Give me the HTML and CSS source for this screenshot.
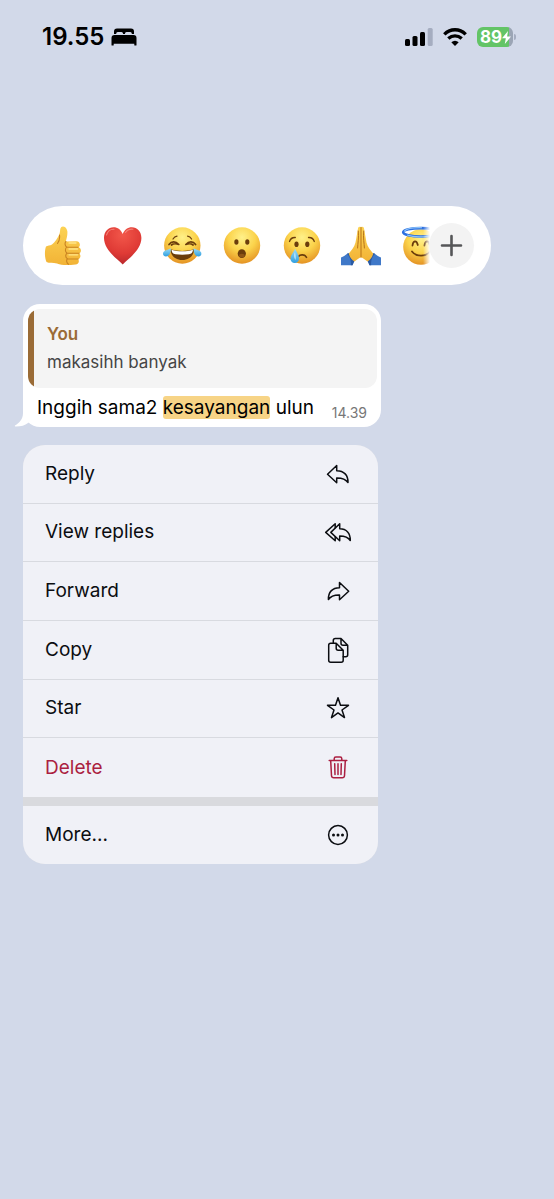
FILE: index.html
```html
<!DOCTYPE html>
<html lang="id">
<head>
    <meta charset="UTF-8">
    <meta name="viewport" content="width=device-width, initial-scale=1">
    <title>Message actions</title>

    <link rel="stylesheet" href="styles.css">
</head>
<body>

<svg class="defs" aria-hidden="true">
    <defs>
        <radialGradient id="face" cx="50%" cy="28%" r="75%">
            <stop offset="0" stop-color="#fff18a"/>
            <stop offset=".5" stop-color="#fbd34b"/>
            <stop offset="1" stop-color="#e28d20"/>
        </radialGradient>
        <linearGradient id="skin" x1="0" y1="0" x2="0" y2="1">
            <stop offset="0" stop-color="#fcd354"/>
            <stop offset="1" stop-color="#f2b336"/>
        </linearGradient>
        <radialGradient id="heart" cx="50%" cy="20%" r="85%">
            <stop offset="0" stop-color="#f2574a"/>
            <stop offset=".6" stop-color="#df3a35"/>
            <stop offset="1" stop-color="#b3262b"/>
        </radialGradient>
        <linearGradient id="tear" x1="0" y1="0" x2="0" y2="1">
            <stop offset="0" stop-color="#9bdcf8"/>
            <stop offset="1" stop-color="#2f9fe0"/>
        </linearGradient>
    </defs>
</svg>

<header class="status">
    <div class="status__left">
        <span class="status__time">19.55</span>
        <svg class="status__bed" width="26" height="18" viewBox="0 0 26 18" aria-hidden="true">
            <path d="M3 6V3.500Q3 .5 6 .5H20Q23 .5 23 3.500V6H20.800V5.500Q20.800 4 19.300 4H15.500Q14 4 14 5.500V6H12V5.500Q12 4 10.500 4H6.700Q5.200 4 5.200 5.500V6Z"/>
            <path d="M.5 17V10Q.5 7 3.500 7H22.500Q25.500 7 25.500 10V17Q25.500 17.500 25 17.500H23.800Q23.300 17.500 23.300 17V15.800H2.700V17Q2.700 17.500 2.200 17.500H1Q.5 17.500 .5 17Z"/>
        </svg>
    </div>
    <div class="status__right">
        <svg width="28" height="20" viewBox="0 0 28 20" aria-label="Signal">
            <rect x="0" y="12" width="5" height="7" rx="1.500"/>
            <rect x="7.500" y="9" width="5" height="10" rx="1.500"/>
            <rect x="15" y="5" width="5" height="14" rx="1.500"/>
            <rect x="22.700" y="1" width="5" height="18" rx="1.500" fill="#a5adc0"/>
        </svg>
        <svg width="24" height="20" viewBox="0 0 24 20" aria-label="Wi-Fi">
            <g fill="none" stroke="#000" stroke-width="3.400">
                <path d="M1.300 7.400Q6 2.800 12 2.800T22.700 7.400"/>
                <path d="M5.300 11.600Q8.300 8.900 12 8.900T18.700 11.600"/>
            </g>
            <path d="M12 19 8.300 15.300Q12 12 15.700 15.300Z"/>
        </svg>
        <div class="battery">
            <span class="battery__level">89</span>
            <svg width="9" height="13" viewBox="0 0 9 13" aria-hidden="true">
                <path fill="#fff" d="M6 0 0 7.200H3.800L2.800 13 9 5.500H5.100Z"/>
            </svg>
        </div>
    </div>
</header>

<main class="chat">
    <div class="reactions">
        <div class="reactions__list">
            <button class="reactions__item" aria-label="Thumbs up">
                <svg width="40" height="40" viewBox="0 0 40 40">
                    <path fill="url(#skin)" d="M3 20.500C4.500 19.500 7 19.800 9 18.500 12 16.500 14.500 12 16.300 8.500 17.500 5.500 16.600 2.500 18.300 1 20 -.3 23.500 .8 24.300 5 24.800 8.500 23.600 12 22.900 15.500L33.500 15.300C37 15.300 38 20 35.500 21.300 38.600 22.200 38.600 26.500 36.200 27.500 38.200 29 37.700 32.200 35.300 33.200 36.700 35.800 35.300 38.300 32.500 38.500 25 39.200 19 39.500 14 37.500 10 36.500 6 37.500 3.500 36 1.500 31.500 1.500 24.500 3 20.500Z"/>
                    <path fill="none" stroke="#c98322" stroke-width="1.100" stroke-linecap="round" d="M22.900 15.500C21.500 17 22 20 23.600 21 22 23 22 25.800 23.800 27 22.500 29 22.600 31.500 24.400 32.700 23 34.500 23.600 37 25.500 38.300M24 21.300H35M24 27.200H36M24.500 33H35M16.500 9C17 12.500 16 15.500 14.500 17.500"/>
                    <path fill="none" stroke="#ffe588" stroke-width="1.300" stroke-linecap="round" d="M26 17H33M26 23H34.500M26 28.800H34.500"/>
                </svg>
            </button>
            <button class="reactions__item" aria-label="Heart">
                <svg width="40" height="40" viewBox="0 0 40 40">
                    <path fill="url(#heart)" d="M19.700 38.400C13 32 1 23.500 1 12 1 5.500 5.300 1.300 10.500 1.300 14.800 1.300 18 4 19.700 8 21.400 4 24.600 1.300 28.900 1.300 34.100 1.300 38.400 5.500 38.400 12 38.400 23.500 26.400 32 19.700 38.400Z"/>
                    <path fill="none" stroke="#f59a90" stroke-width="1.100" stroke-linecap="round" opacity=".7" d="M3.500 9C5 4.500 8 3 11 3.200M22.500 6.500C24.500 3.500 27 2.900 30 3.200"/>
                </svg>
            </button>
            <button class="reactions__item" aria-label="Tears of joy">
                <svg width="40" height="40" viewBox="0 0 40 40">
                    <circle cx="20.300" cy="19.500" r="18.200" fill="url(#face)"/>
                    <path fill="#6b3d0c" d="M8.500 23.300C16 25.500 24.500 25.500 32 23.300 32 29.500 27.500 34 20.300 34S8.500 29.500 8.500 23.300Z"/>
                    <path fill="#fff" d="M9.500 23.800C16 25.800 24.500 25.800 31 23.800 30.500 27 29.500 27.800 27 28.200 22.500 28.800 18 28.800 13.500 28.200 11 27.800 10 27 9.500 23.800Z"/>
                    <g fill="none" stroke="#6b3d0c" stroke-width="1.700" stroke-linecap="round" stroke-linejoin="round">
                        <path d="M7 18.500C9.500 15.200 13.500 15 16.800 18.500 13.800 17.400 11 17.800 9.500 19"/>
                        <path d="M33.600 18.500C31.100 15.200 27.100 15 23.800 18.500 26.800 17.400 29.600 17.800 31.100 19"/>
                        <path stroke-width="1.200" d="M11 13C12 11.400 13.300 10.500 15 10.200M29.600 13C28.600 11.400 27.300 10.500 25.600 10.200"/>
                    </g>
                    <path fill="url(#tear)" d="M8.800 22.300C9 27 7.300 30.500 3.900 30.500 1.500 30.500 .3 28 1.500 26 3 23.800 6 24 8.800 22.300Z"/>
                    <path fill="url(#tear)" d="M31.600 22.300C31.400 27 33.100 30.500 36.500 30.500 38.900 30.500 40.100 28 38.900 26 37.400 23.800 34.400 24 31.600 22.300Z"/>
                </svg>
            </button>
            <button class="reactions__item" aria-label="Surprised">
                <svg width="40" height="40" viewBox="0 0 40 40">
                    <circle cx="20" cy="19.500" r="18.200" fill="url(#face)"/>
                    <ellipse cx="14.400" cy="16" rx="2.100" ry="2.800" fill="#6b3d0c"/>
                    <ellipse cx="25.300" cy="16" rx="2.100" ry="2.800" fill="#6b3d0c"/>
                    <ellipse cx="19.800" cy="27.600" rx="4.100" ry="4.300" fill="#6b3d0c"/>
                    <ellipse cx="19.800" cy="29.600" rx="2.800" ry="1.900" fill="#8d5516"/>
                </svg>
            </button>
            <button class="reactions__item" aria-label="Crying">
                <svg width="40" height="40" viewBox="0 0 40 40">
                    <circle cx="20" cy="19.500" r="18.200" fill="url(#face)"/>
                    <ellipse cx="14.500" cy="18.300" rx="2.100" ry="2.800" fill="#6b3d0c"/>
                    <ellipse cx="25.300" cy="18.300" rx="2.100" ry="2.800" fill="#6b3d0c"/>
                    <g fill="none" stroke="#6b3d0c" stroke-width="1.300" stroke-linecap="round">
                        <path d="M7.500 15.500C8.300 13 10.500 11.300 13.300 11.500M32.300 15.500C31.500 13 29.300 11.300 26.500 11.500"/>
                        <path stroke-width="1.600" d="M16.500 30.500C18 28.200 23 28.200 24.500 31.300"/>
                    </g>
                    <path fill="url(#tear)" d="M13.200 22.800C14.500 26 17 29 17 32.400 17 35.200 15.200 37 12.700 37S8.500 35.200 8.500 32.400C8.500 29 12 26 13.200 22.800Z"/>
                    <path fill="#dff5ff" opacity=".7" d="M13 26C13.500 28.500 14.200 31 13.500 34 12 32 11.500 29 13 26Z"/>
                </svg>
            </button>
            <button class="reactions__item" aria-label="Folded hands">
                <svg width="40" height="40" viewBox="0 0 40 40">
                    <path fill="#3f78c8" d="M0 31.500C3 30.500 5 28.500 7.200 27L13.500 34.500 11.500 39.200H0ZM40 31.500C37 30.500 35 28.500 32.800 27L26.500 34.500 28.500 39.200H40Z"/>
                    <path fill="#2b5aa2" d="M7.200 27 13.500 34.500 11.500 39.200H9.800C10.500 34.500 8.500 30.500 6.200 28ZM32.800 27 26.500 34.500 28.500 39.200H30.200C29.500 34.500 31.500 30.500 33.800 28Z"/>
                    <path fill="url(#skin)" d="M20 1.200C18.600 .4 17 .8 16.900 3L14.500 16.500C13.500 21 10 25 7.800 27.500 8.500 31 11 34.200 13.500 35.500 16.300 33.500 18.600 31.500 20 31.500S23.700 33.500 26.500 35.500C29 34.200 31.500 31 32.200 27.500 30 25 26.500 21 25.500 16.500L23.100 3C23 .8 21.400 .4 20 1.200Z"/>
                    <path fill="none" stroke="#b87318" stroke-width="1" stroke-linecap="round" d="M20 1.500V31M17.300 5C18 12 16.800 17 16.600 22M22.700 5C22 12 23.200 17 23.400 22"/>
                </svg>
            </button>
            <button class="reactions__item" aria-label="Halo">
                <svg width="40" height="40" viewBox="0 0 40 40">
                    <circle cx="20" cy="21" r="17.800" fill="url(#face)"/>
                    <g fill="none" stroke="#6b3d0c" stroke-width="1.800" stroke-linecap="round">
                        <path d="M11.500 19.500C12 14.500 15.500 13.700 16.800 19M23.500 19.500C24 14.500 27.500 13.700 28.800 19"/>
                        <path d="M11 25.500C15 31 25 31 29 25.500"/>
                    </g>
                    <ellipse cx="20" cy="6.300" rx="17.800" ry="4.200" fill="none" stroke="#2c6fe0" stroke-width="2.600"/>
                    <path fill="none" stroke="#8cc4fa" stroke-width="1.100" d="M3 5.300C5.500 2.500 14 1.500 21 1.700M6 9C12 11 22 11 28 10"/>
                </svg>
            </button>
        </div>
        <button class="reactions__more" aria-label="More reactions">
            <svg width="23" height="23" viewBox="0 0 23 23">
                <path fill="none" stroke="#555658" stroke-width="2.600" stroke-linecap="round" d="M11.500 2V21M2 11.500H21"/>
            </svg>
        </button>
    </div>

    <article class="bubble">
        <svg class="bubble__tail" width="20" height="18" viewBox="0 0 20 18" aria-hidden="true">
            <path fill="#fff" d="M9 0V4C9 10 5.500 14 1 16.500 .5 17 1 17.500 2 17.500 7 17.500 11 16.500 14 14L20 9V0Z"/>
        </svg>
        <blockquote class="quote">
            <p class="quote__author">You</p>
            <p class="quote__text">makasihh banyak</p>
        </blockquote>
        <div class="bubble__body">
            <p class="bubble__text">Inggih sama2 <mark>kesayangan</mark> ulun</p>
            <time class="bubble__time">14.39</time>
        </div>
    </article>

    <div class="menu">
        <div class="menu__group menu__group--main">
            <button class="menu__item">
                Reply
                <svg class="menu__icon" viewBox="0 0 28 28">
                    <path d="M3.500 14.300 12.700 5.500V10.700C20 10.700 24.200 15.200 24 22.600 21.500 18.900 18 17.800 12.700 17.900V22.700Z"/>
                </svg>
            </button>
            <button class="menu__item">
                View replies
                <svg class="menu__icon" viewBox="0 0 28 28">
                    <path d="M6.800 14.400 15.700 5.700V10.800C22.500 10.800 26.500 15.200 26.300 22.600 24 18.900 20.800 18 15.700 18V22.800Z"/>
                    <path d="M11.200 9.800V5.700L1.700 14.400 11.200 22.800V18.800"/>
                </svg>
            </button>
            <button class="menu__item">
                Forward
                <svg class="menu__icon" viewBox="0 0 28 28">
                    <path d="M24.700 14.300 15.500 5.500V10.700C8.200 10.700 4.200 15.200 4.400 22.600 6.700 18.900 10.200 17.800 15.500 17.900V22.700Z"/>
                </svg>
            </button>
            <button class="menu__item">
                Copy
                <svg class="menu__icon" viewBox="0 0 28 28">
                    <path d="M6.700 7.200H12.200L19.200 14.300V24.300Q19.200 26.300 17.200 26.300H6.700Q4.700 26.300 4.700 24.300V9.200Q4.700 7.200 6.700 7.200ZM12.200 7.200V12.300Q12.200 14.300 14.200 14.300H19.200"/>
                    <path d="M9.300 7V4.500Q9.300 2.500 11.300 2.500H17L23.700 9.200V18.700Q23.700 20.700 21.700 20.700H19.200M17 2.500V7.200Q17 9.200 19 9.200H23.700"/>
                </svg>
            </button>
            <button class="menu__item">
                Star
                <svg class="menu__icon" viewBox="0 0 28 28">
                    <path d="M14 3.700 16.500 11.300H24.500L18 16 20.500 23.600 14 18.900 7.500 23.600 10 16 3.500 11.300H11.500Z"/>
                </svg>
            </button>
            <button class="menu__item menu__item--danger">
                Delete
                <svg class="menu__icon" viewBox="0 0 28 28">
                    <path d="M5.200 6.500H22.800M10.200 6.300V4.700Q10.200 3 11.900 3H16.100Q17.800 3 17.800 4.700V6.300M6.700 6.700 7.500 21.700Q7.700 23.700 9.700 23.700H18.300Q20.300 23.700 20.500 21.700L21.300 6.700M10.700 9.800 11 20.500M14 9.800V20.500M17.300 9.800 17 20.500"/>
                </svg>
            </button>
        </div>
        <div class="menu__group">
            <button class="menu__item">
                More...
                <svg class="menu__icon" viewBox="0 0 28 28">
                    <circle cx="14" cy="14" r="9.400"/>
                    <g class="menu__dots">
                        <circle cx="9.500" cy="14" r="1.500"/>
                        <circle cx="14" cy="14" r="1.500"/>
                        <circle cx="18.500" cy="14" r="1.500"/>
                    </g>
                </svg>
            </button>
        </div>
    </div>
</main>

</body>
</html>
```
FILE: styles.css
```css
* {
    box-sizing: border-box;
    margin: 0;
    padding: 0;
}

body {
    background: #d2d9e9;
    color: #0b0d11;
    font-family: Inter, "Liberation Sans", sans-serif;
    font-size: 19px;
    min-height: 100vh;
}

button {
    background: none;
    border: none;
    color: inherit;
    font: inherit;
    cursor: pointer;
}

svg {
    display: block;
    flex-shrink: 0;
}

.defs {
    position: absolute;
    width: 0;
    height: 0;
}

/* status bar */
.status {
    display: flex;
    justify-content: space-between;
    align-items: center;
    height: 74px;
    padding: 0 41px 0 42px;
}
.status__left, .status__right {
    display: flex;
    align-items: center;
}
.status__left {
    gap: 7px;
}
.status__right {
    gap: 10px;
}
.status__time {
    color: #000;
    font-size: 24px;
    font-weight: 600;
    line-height: 28px;
}
.battery {
    display: flex;
    align-items: center;
    position: relative;
    height: 20px;
    width: 36px;
    padding-left: 3px;
    border-radius: 6px;
    background: linear-gradient(to right, #63c466 89%, #9ba5b5 89%);
}
.battery::after {
    content: "";
    position: absolute;
    left: 100%;
    top: 7px;
    width: 2px;
    height: 6px;
    margin-left: 1px;
    border-radius: 0 2px 2px 0;
    background: #a5adc0;
}
.battery__level {
    color: #fff;
    font-size: 17px;
    font-weight: 700;
    line-height: 20px;
}

.chat {
    padding: 132px 23px 48px;
}

/* reactions */
.reactions {
    position: relative;
    max-width: 468px;
    padding: 20px 50px 19px 20px;
    border-radius: 40px;
    background: #fff;
}
.reactions__list {
    display: flex;
    justify-content: space-between;
    -webkit-mask-image: linear-gradient(to left, transparent 11px, #000 18px);
    mask-image: linear-gradient(to left, transparent 11px, #000 18px);
}
.reactions__item {
    width: 40px;
    height: 40px;
}
.reactions__more {
    position: absolute;
    right: 17px;
    top: 17px;
    display: flex;
    align-items: center;
    justify-content: center;
    width: 45px;
    height: 45px;
    border-radius: 50%;
    background: #f3f3f3;
}

/* message */
.bubble {
    position: relative;
    max-width: 358px;
    margin-top: 19px;
    padding: 5px 4px 7px 5px;
    border-radius: 17px;
    background: #fff;
}
.bubble__tail {
    position: absolute;
    left: -9px;
    bottom: 0;
}
.quote {
    position: relative;
    overflow: hidden;
    padding: 13px 19px 14px;
    border-radius: 12px;
    background: #f4f4f4;
}
.quote::before {
    content: "";
    position: absolute;
    left: 0;
    top: 0;
    bottom: 0;
    width: 6px;
    background: #9a6b36;
}
.quote__author {
    color: #9a6b36;
    font-size: 17px;
    font-weight: 600;
    line-height: 24px;
    margin-bottom: 4px;
}
.quote__text {
    color: #454545;
    font-size: 17px;
    line-height: 24px;
}
.bubble__body {
    display: flex;
    justify-content: space-between;
    align-items: flex-end;
    padding: 8px 10px 0 9px;
}
.bubble__text {
    color: #000;
    line-height: 24px;
    white-space: nowrap;
}
.bubble__text mark {
    border-radius: 3px;
    background: #f7d486;
}
.bubble__time {
    color: #777;
    font-size: 14px;
    line-height: 14px;
}

/* context menu */
.menu {
    max-width: 355px;
    margin-top: 18px;
    border-radius: 22px;
    background: #d9dade;
    overflow: hidden;
}
.menu__group {
    display: grid;
    grid-auto-rows: 1fr;
    min-height: 58px;
    background: #f0f1f7;
}
.menu__group--main {
    min-height: 352px;
    margin-bottom: 9px;
}
.menu__item {
    display: flex;
    justify-content: space-between;
    align-items: center;
    padding: 0 26px 0 22px;
    border-bottom: 1px solid #d8dae0;
    line-height: 24px;
    text-align: left;
}
.menu__item:last-child {
    border-bottom: none;
}
.menu__item:hover {
    background: #e6e8ef;
}
.menu__item--danger {
    color: #ab1f41;
}
.menu__icon {
    width: 28px;
    height: 28px;
    fill: none;
    stroke: currentColor;
    stroke-width: 1.5px;
    stroke-linecap: round;
    stroke-linejoin: round;
}
.menu__dots {
    fill: currentColor;
    stroke: none;
}
```
